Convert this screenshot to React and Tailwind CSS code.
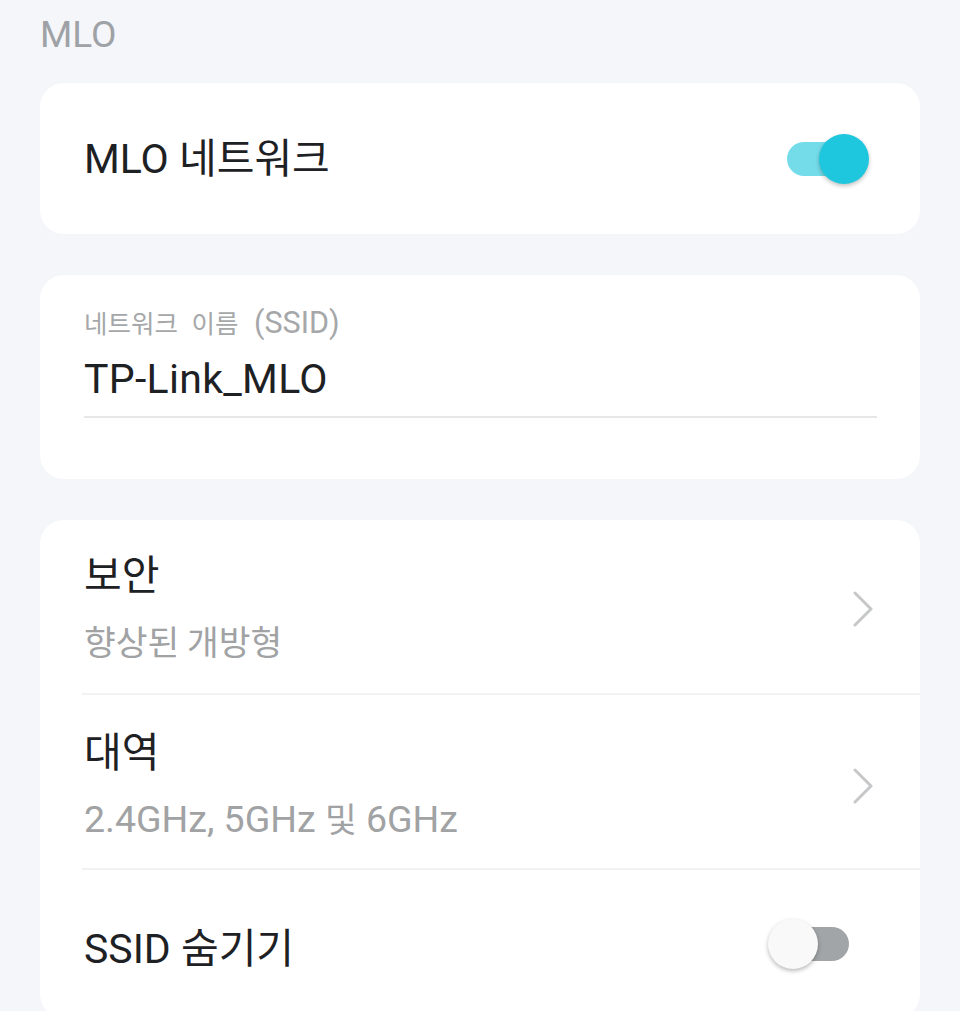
import React from "react";

const FONT = { fontFamily: '"Roboto", "Noto Sans CJK KR", sans-serif' };

function K({ text, k }) {
  const parts = text.split(/([\uAC00-\uD7A3]+(?:\s[\uAC00-\uD7A3]+)*)/);
  return (
    <>
      {parts.map((p, i) =>
        /[\uAC00-\uD7A3]/.test(p) ? (
          <span key={i} className={`${k} leading-none`} style={{ fontFamily: '"Noto Sans CJK KR", sans-serif' }}>
            {p}
          </span>
        ) : (
          <React.Fragment key={i}>{p}</React.Fragment>
        )
      )}
    </>
  );
}

function Chevron() {
  return (
    <svg width="22" height="36" viewBox="0 0 22 36" fill="none">
      <polyline points="3,2 19,18 3,34" stroke="#c6c7c8" strokeWidth="3" strokeLinecap="round" strokeLinejoin="round" />
    </svg>
  );
}

function ToggleOn() {
  return (
    <div className="relative w-[82px] h-[50px] shrink-0">
      <div className="absolute left-0 top-[8px] w-[62px] h-[34px] rounded-full bg-[#74dce9]" />
      <div className="absolute right-0 top-0 w-[50px] h-[50px] rounded-full bg-[#1ec7de] shadow-[0_2px_4px_rgba(0,0,0,0.25)]" />
    </div>
  );
}

function ToggleOff() {
  return (
    <div className="relative w-[81px] h-[50px] shrink-0">
      <div className="absolute right-0 top-[8px] w-[60px] h-[34px] rounded-full bg-[#a2a5a7]" />
      <div className="absolute left-0 top-0 w-[50px] h-[50px] rounded-full bg-[#f9f9f9] shadow-[0_2px_4px_rgba(0,0,0,0.28)]" />
    </div>
  );
}

function NavRow({ title, sub, divider, pt, pb }) {
  return (
    <div className="flex flex-col">
      {divider && <div className="ml-[42px] h-[2px] bg-[#f1f2f4]" />}
      <div className={`flex items-center justify-between pl-[44px] pr-[46px] ${pt} ${pb}`}>
        <div className="flex flex-col">
          <div className="text-[41px] leading-[48px] text-[#1e2124]">
            <K text={title} k="text-[1em]" />
          </div>
          <div className="mt-[18px] text-[37.5px] leading-[48px] text-[#a0a2a4]">
            <K text={sub} k="text-[0.92em]" />
          </div>
        </div>
        <Chevron />
      </div>
    </div>
  );
}

export default function App() {
  return (
    <div className="min-h-[1011px] bg-[#f5f6fa] px-10 pt-[13px] overflow-hidden" style={FONT}>
      <div className="text-[37px] leading-[44px] text-[#9ea2a6]">MLO</div>

      <div className="mt-[26px] h-[151px] rounded-[24px] bg-white flex items-center justify-between pl-[44px] pr-[51px]">
        <div className="text-[41px] leading-[48px] text-[#1e2124]">
          <K text="MLO 네트워크" k="text-[1em]" />
        </div>
        <ToggleOn />
      </div>

      <div className="mt-[41px] rounded-[24px] bg-white pl-[44px] pr-[43px] pt-[30px] pb-[61px]">
        <div className="text-[30.5px] leading-[36px] text-[#a5a7a9] [word-spacing:8px]">
          <K text="네트워크 이름 (SSID)" k="text-[25.5px]" />
        </div>
        <div className="mt-[14px] text-[41px] leading-[48px] tracking-[0.3px] text-[#1e2124]">TP-Link_MLO</div>
        <div className="mt-[13px] h-[2px] bg-[#e6e7e8]" />
      </div>

      <div className="mt-[41px] rounded-[24px] bg-white">
        <NavRow title="보안" sub="향상된 개방형" pt="pt-[32px]" pb="pb-[27px]" />
        <NavRow title="대역" sub="2.4GHz, 5GHz 및 6GHz" divider pt="pt-[34px]" pb="pb-[25px]" />
        <div className="ml-[42px] h-[2px] bg-[#f1f2f4]" />
        <div className="flex items-center justify-between pl-[44px] pr-[71px] pt-[45px] pb-[45px]">
          <div className="text-[41px] leading-[48px] text-[#1e2124] mt-[10px]">
            <K text="SSID 숨기기" k="text-[1em]" />
          </div>
          <ToggleOff />
        </div>
      </div>
    </div>
  );
}
